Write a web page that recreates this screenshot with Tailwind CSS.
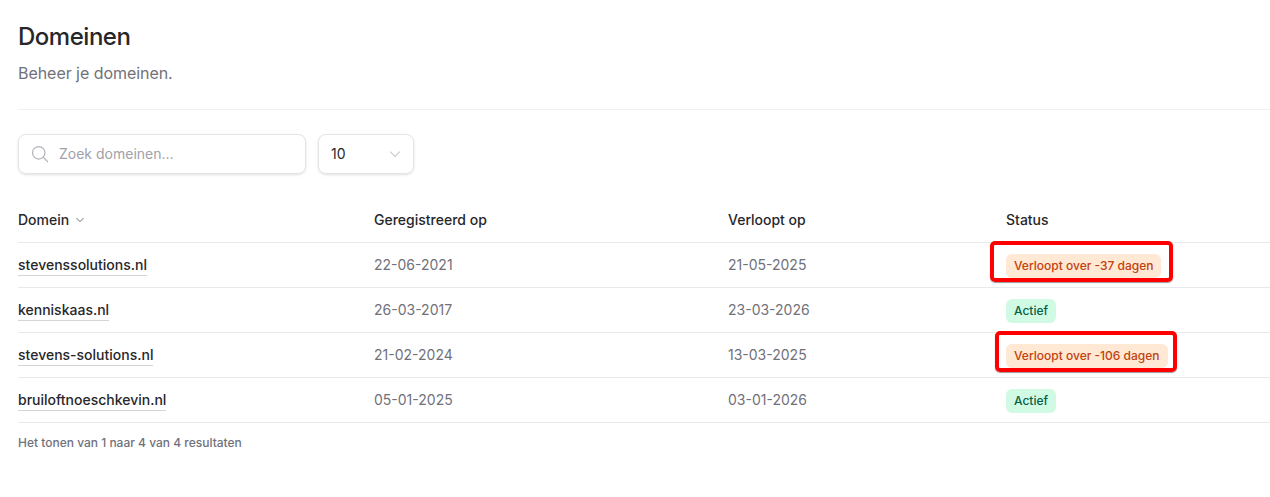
<!DOCTYPE html>
<html lang="nl">
<head>
<meta charset="utf-8">
<title>Domeinen</title>
<script src="https://cdn.jsdelivr.net/npm/@tailwindcss/browser@4"></script>
</head>
<body class="bg-white font-[Inter,sans-serif] text-[#18181b] h-[497px] w-[1270px] overflow-hidden relative">
<main class="pl-[18px] pt-[22px]">
  <h1 class="text-2xl leading-[30px] font-medium tracking-[-0.02em] text-[#27272a]">Domeinen</h1>
  <p class="mt-[9px] text-base leading-6 text-[#71717a] tracking-[-0.003em]">Beheer je domeinen.</p>
  <div class="mt-6 border-t border-[#f0f0f1]"></div>
  <div class="mt-6 flex gap-3">
    <div class="w-[288px] h-10 rounded-lg border border-[#e4e4e7] shadow-sm flex items-center pl-[11px] gap-[9px] text-sm text-[#a1a1aa]">
      <svg class="w-5 h-5" viewBox="0 0 24 24" fill="none" stroke="#b4b4ba" stroke-width="1.5" stroke-linecap="round"><circle cx="10.5" cy="10.5" r="7.500"/><path d="M21 21l-5.200-5.200"/></svg>
      <span>Zoek domeinen...</span>
    </div>
    <div class="w-[96px] h-10 rounded-lg border border-[#e4e4e7] shadow-sm flex items-center justify-between pl-3 pr-3 text-sm text-[#27272a]">
      <span>10</span>
      <svg class="w-[12px] h-[12px]" viewBox="0 0 12 12" fill="none" stroke="#d0d0d5" stroke-width="1.200" stroke-linecap="round" stroke-linejoin="round"><path d="M1.500 4l4.500 4.500L10.500 4"/></svg>
    </div>
  </div>
  <div class="mt-6 text-sm">
    <div class="grid grid-cols-[356px_354px_278px_1fr] h-[45px] items-center border-b border-[#e9e9eb] font-medium text-[#27272a]">
      <div class="flex items-center gap-[6px]">Domein
        <svg class="w-[10px] h-[10px]" viewBox="0 0 12 12" fill="none" stroke="#a1a1aa" stroke-width="1.400" stroke-linecap="round" stroke-linejoin="round"><path d="M2 4l4 4 4-4"/></svg>
      </div>
      <div>Geregistreerd op</div>
      <div>Verloopt op</div>
      <div>Status</div>
    </div>
    <div class="grid grid-cols-[356px_354px_278px_1fr] h-[45px] items-center border-b border-[#e9e9eb] text-[#71717a]">
      <div><span class="font-medium text-[#27272a] border-b border-[#d4d4d8] pb-[2px]">stevenssolutions.nl</span></div>
      <div>22-06-2021</div>
      <div>21-05-2025</div>
      <div class="pt-[2px]"><span class="inline-flex h-6 items-center rounded-md px-2 text-xs font-medium bg-[#ffe8d4] text-[#c2410c]">Verloopt over -37 dagen</span></div>
    </div>
    <div class="grid grid-cols-[356px_354px_278px_1fr] h-[45px] items-center border-b border-[#e9e9eb] text-[#71717a]">
      <div><span class="font-medium text-[#27272a] border-b border-[#d4d4d8] pb-[2px]">kenniskaas.nl</span></div>
      <div>26-03-2017</div>
      <div>23-03-2026</div>
      <div class="pt-[2px]"><span class="inline-flex h-6 items-center rounded-md px-2 text-xs font-medium bg-[#d1fae5] text-[#065f46]">Actief</span></div>
    </div>
    <div class="grid grid-cols-[356px_354px_278px_1fr] h-[45px] items-center border-b border-[#e9e9eb] text-[#71717a]">
      <div><span class="font-medium text-[#27272a] border-b border-[#d4d4d8] pb-[2px]">stevens-solutions.nl</span></div>
      <div>21-02-2024</div>
      <div>13-03-2025</div>
      <div class="pt-[2px]"><span class="inline-flex h-6 items-center rounded-md px-2 text-xs font-medium bg-[#ffe8d4] text-[#c2410c]">Verloopt over -106 dagen</span></div>
    </div>
    <div class="grid grid-cols-[356px_354px_278px_1fr] h-[45px] items-center border-b border-[#e9e9eb] text-[#71717a]">
      <div><span class="font-medium text-[#27272a] border-b border-[#d4d4d8] pb-[2px]">bruiloftnoeschkevin.nl</span></div>
      <div>05-01-2025</div>
      <div>03-01-2026</div>
      <div class="pt-[2px]"><span class="inline-flex h-6 items-center rounded-md px-2 text-xs font-medium bg-[#d1fae5] text-[#065f46]">Actief</span></div>
    </div>
  </div>
  <p class="mt-3 text-xs leading-4 font-medium text-[#71717a]">Het tonen van 1 naar 4 van 4 resultaten</p>
</main>
<div class="absolute left-[990px] top-[241px] w-[183px] h-[41px] border-4 border-[#fe0000] rounded-[5px] shadow-[0_1px_1px_rgba(0,0,0,0.4)]"></div>
<div class="absolute left-[995px] top-[331px] w-[182px] h-[41px] border-4 border-[#fe0000] rounded-[5px] shadow-[0_1px_1px_rgba(0,0,0,0.4)]"></div>
</body>
</html>
